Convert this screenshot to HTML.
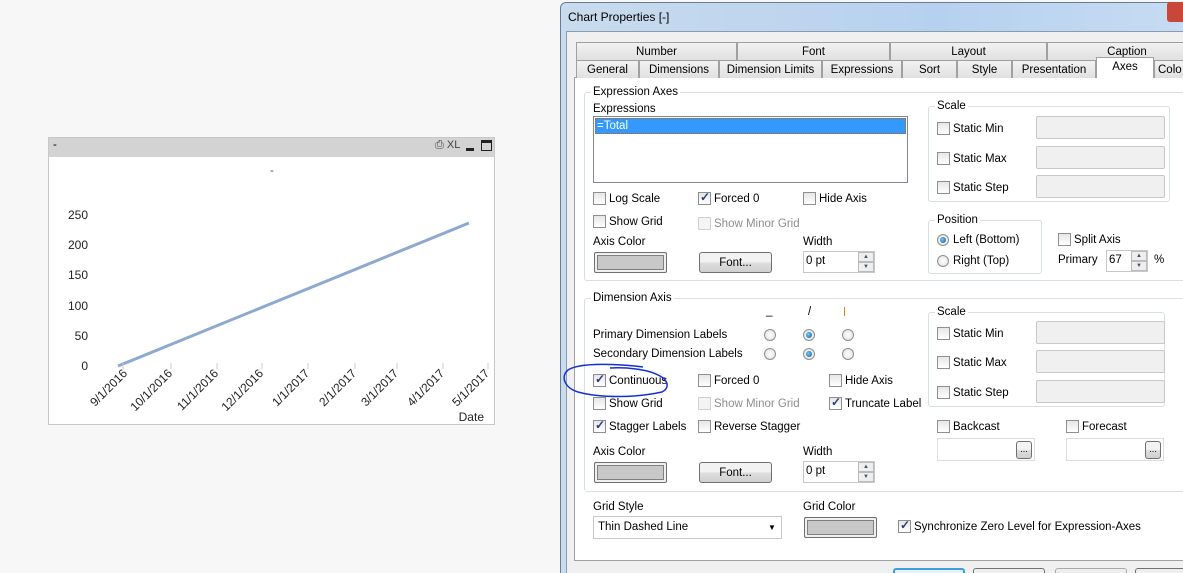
<!DOCTYPE html>
<html style="overflow:hidden;width:1183px;height:573px"><head><style>
*{margin:0;padding:0;box-sizing:border-box}
body{width:1183px;height:573px;background:#f7f7f7;position:relative;overflow:hidden;font-family:"Liberation Sans",sans-serif;font-size:11.5px;color:#000}
.a{position:absolute}
.t{position:absolute;white-space:nowrap;line-height:13px}
.cb{position:absolute;width:13px;height:13px;border:1px solid #8f8f8f;background:linear-gradient(#e6e6e6,#fff)}
.cb.k::after{content:"✓";position:absolute;left:1px;top:-3px;font-size:12px;color:#2a3d7a;font-weight:bold}
.cb.d{border-color:#cfcfcf;background:#f4f4f4}
.rb{position:absolute;width:12px;height:12px;border-radius:50%;border:1px solid #8f8f8f;background:radial-gradient(#fff,#ddd)}
.rb.on::after{content:"";position:absolute;left:2px;top:2px;width:6px;height:6px;border-radius:50%;background:radial-gradient(circle at 40% 40%,#6fd0ff,#0a4f8a)}
.gb{position:absolute;border:1px solid #d5dfe5;border-radius:3px}
.gl{position:absolute;background:#fff;padding:0 2px;line-height:13px;white-space:nowrap}
.tab{position:absolute;border:1px solid #a0a0a0;border-bottom:none;background:linear-gradient(#f2f2f2,#e0e0e0);text-align:center;line-height:18px;height:18px}
.btn{position:absolute;border:1px solid #707070;border-radius:3px;background:linear-gradient(#f2f2f2 45%,#dcdcdc 55%,#d0d0d0);text-align:center;line-height:20px}
.col{position:absolute;border:1px solid #707070;border-radius:2px;background:#c8c8c8;box-shadow:inset 0 0 0 2px #f0f0f0,inset 0 0 0 3px #808080}
.inp{position:absolute;border:1px solid #c8c8c8;background:#f0f0f0;border-radius:2px}
.gray{color:#8d8d8d}
</style></head><body>

<!-- chart object -->
<div class="a" style="left:48px;top:137px;width:447px;height:288px;border:1px solid #c8c8c8;background:#fff"></div>
<div class="a" style="left:49px;top:138px;width:445px;height:19px;background:#d3d3d3"></div>
<div class="t" style="left:53px;top:139px">-</div>
<div class="t" style="left:435px;top:139px;color:#444;font-size:11px">⎙ XL</div>
<div class="a" style="left:466px;top:148px;width:8px;height:3px;background:#222"></div>
<div class="a" style="left:481px;top:140px;width:11px;height:11px;border:1px solid #222;border-top-width:3px"></div>
<div class="t" style="left:270px;top:165px;color:#555">-</div>
<div class="t" style="left:60px;top:209px;width:28px;text-align:right;font-size:12px;color:#222">250</div>
<div class="t" style="left:60px;top:239px;width:28px;text-align:right;font-size:12px;color:#222">200</div>
<div class="t" style="left:60px;top:269px;width:28px;text-align:right;font-size:12px;color:#222">150</div>
<div class="t" style="left:60px;top:300px;width:28px;text-align:right;font-size:12px;color:#222">100</div>
<div class="t" style="left:60px;top:330px;width:28px;text-align:right;font-size:12px;color:#222">50</div>
<div class="t" style="left:60px;top:360px;width:28px;text-align:right;font-size:12px;color:#222">0</div>
<svg class="a" style="left:48px;top:137px" width="447" height="288">
<line x1="70" y1="229" x2="421" y2="86" stroke="#8ea9cf" stroke-width="3"/>
<g stroke="#ccc"><line x1="75" y1="232" x2="75" y2="226"/><line x1="123" y1="232" x2="123" y2="226"/><line x1="169" y1="232" x2="169" y2="226"/><line x1="214" y1="232" x2="214" y2="226"/><line x1="260" y1="232" x2="260" y2="226"/><line x1="307" y1="232" x2="307" y2="226"/><line x1="349" y1="232" x2="349" y2="226"/><line x1="395" y1="232" x2="395" y2="226"/><line x1="440" y1="232" x2="440" y2="226"/></g>
<g font-family="Liberation Sans" font-size="12" fill="#222" text-anchor="end">
<text transform="translate(80,237) rotate(-45)">9/1/2016</text>
<text transform="translate(125,237) rotate(-45)">10/1/2016</text>
<text transform="translate(171,237) rotate(-45)">11/1/2016</text>
<text transform="translate(216,237) rotate(-45)">12/1/2016</text>
<text transform="translate(262,237) rotate(-45)">1/1/2017</text>
<text transform="translate(309,237) rotate(-45)">2/1/2017</text>
<text transform="translate(351,237) rotate(-45)">3/1/2017</text>
<text transform="translate(397,237) rotate(-45)">4/1/2017</text>
<text transform="translate(442,237) rotate(-45)">5/1/2017</text>
</g>
<text x="436" y="284" font-family="Liberation Sans" font-size="12" fill="#222" text-anchor="end">Date</text>
</svg>

<!-- dialog -->
<div class="a" style="left:560px;top:2px;width:630px;height:571px;border:1px solid #6a7c90;border-bottom:none;border-radius:6px 0 0 0;background:linear-gradient(90deg,#c9dbee,#b6d1ef 60%,#c6dcf3)"></div>
<div class="t" style="left:568px;top:11px;font-size:12px">Chart Properties [-]</div>
<div class="a" style="left:1167px;top:2px;width:20px;height:20px;background:#c8463a;border-radius:3px"></div>
<div class="a" style="left:566px;top:31px;width:620px;height:542px;background:#f0f0f0;border:1px solid #8a9bad;border-bottom:none"></div>
<div class="a" style="left:574px;top:77px;width:612px;height:484px;background:#fff;border:1px solid #a0a0a0"></div>

<div class="tab" style="left:576px;top:42px;width:161px">Number</div>
<div class="tab" style="left:737px;top:42px;width:153px">Font</div>
<div class="tab" style="left:890px;top:42px;width:157px">Layout</div>
<div class="tab" style="left:1047px;top:42px;width:160px">Caption</div>
<div class="tab" style="left:576px;top:60px;width:63px">General</div>
<div class="tab" style="left:639px;top:60px;width:80px">Dimensions</div>
<div class="tab" style="left:719px;top:60px;width:103px">Dimension Limits</div>
<div class="tab" style="left:822px;top:60px;width:80px">Expressions</div>
<div class="tab" style="left:902px;top:60px;width:55px">Sort</div>
<div class="tab" style="left:957px;top:60px;width:55px">Style</div>
<div class="tab" style="left:1012px;top:60px;width:84px">Presentation</div>
<div class="tab" style="left:1154px;top:60px;width:40px;text-align:left;padding-left:3px">Colo</div>
<div class="tab" style="left:1096px;top:57px;width:58px;height:21px;background:#fff;line-height:19px">Axes</div>

<!-- Expression Axes -->
<div class="gb" style="left:584px;top:92px;width:610px;height:189px"></div>
<div class="gl" style="left:591px;top:86px">Expression Axes</div>
<div class="t" style="left:593px;top:103px">Expressions</div>
<div class="a" style="left:593px;top:116px;width:315px;height:67px;border:1px solid #828790;background:#fff"></div>
<div class="a" style="left:595px;top:118px;width:311px;height:16px;background:#3399ff;border:1px dotted #c06000"></div>
<div class="t" style="left:597px;top:120px;color:#fff">=Total</div>
<div class="cb" style="left:593px;top:192px"></div><div class="t" style="left:609px;top:193px">Log Scale</div>
<div class="cb k" style="left:698px;top:192px"></div><div class="t" style="left:714px;top:193px">Forced 0</div>
<div class="cb" style="left:803px;top:192px"></div><div class="t" style="left:819px;top:193px">Hide Axis</div>
<div class="cb" style="left:593px;top:215px"></div><div class="t" style="left:609px;top:216px">Show Grid</div>
<div class="cb d" style="left:698px;top:217px"></div><div class="t gray" style="left:714px;top:218px">Show Minor Grid</div>
<div class="t" style="left:593px;top:236px">Axis Color</div>
<div class="col" style="left:594px;top:252px;width:73px;height:21px"></div>
<div class="btn" style="left:699px;top:252px;width:73px;height:21px">Font...</div>
<div class="t" style="left:803px;top:236px">Width</div>
<div class="a" style="left:803px;top:251px;width:72px;height:22px;border:1px solid #c8c8c8;background:#fff"></div>
<div class="t" style="left:806px;top:255px">0 pt</div>
<div class="a" style="left:858px;top:252px;width:16px;height:10px;border:1px solid #bbb;background:#eee;font-size:6px;text-align:center;line-height:8px;color:#456">▲</div>
<div class="a" style="left:858px;top:262px;width:16px;height:10px;border:1px solid #bbb;background:#eee;font-size:6px;text-align:center;line-height:8px;color:#456">▼</div>

<div class="gb" style="left:928px;top:106px;width:242px;height:96px"></div>
<div class="gl" style="left:935px;top:100px">Scale</div>
<div class="cb" style="left:937px;top:122px"></div><div class="t" style="left:953px;top:123px">Static Min</div>
<div class="inp" style="left:1036px;top:116px;width:129px;height:23px"></div>
<div class="cb" style="left:937px;top:152px"></div><div class="t" style="left:953px;top:153px">Static Max</div>
<div class="inp" style="left:1036px;top:146px;width:129px;height:23px"></div>
<div class="cb" style="left:937px;top:181px"></div><div class="t" style="left:953px;top:182px">Static Step</div>
<div class="inp" style="left:1036px;top:175px;width:129px;height:23px"></div>

<div class="gb" style="left:928px;top:220px;width:114px;height:54px"></div>
<div class="gl" style="left:935px;top:214px">Position</div>
<div class="rb on" style="left:937px;top:234px"></div><div class="t" style="left:953px;top:234px">Left (Bottom)</div>
<div class="rb" style="left:937px;top:255px"></div><div class="t" style="left:953px;top:255px">Right (Top)</div>
<div class="cb" style="left:1058px;top:233px"></div><div class="t" style="left:1074px;top:234px">Split Axis</div>
<div class="t" style="left:1058px;top:254px">Primary</div>
<div class="a" style="left:1106px;top:250px;width:42px;height:22px;border:1px solid #c8c8c8;background:#fff"></div>
<div class="t" style="left:1109px;top:254px">67</div>
<div class="a" style="left:1131px;top:251px;width:16px;height:10px;border:1px solid #bbb;background:#eee;font-size:6px;text-align:center;line-height:8px;color:#456">▲</div>
<div class="a" style="left:1131px;top:261px;width:16px;height:10px;border:1px solid #bbb;background:#eee;font-size:6px;text-align:center;line-height:8px;color:#456">▼</div>
<div class="t" style="left:1154px;top:254px">%</div>

<!-- Dimension Axis -->
<div class="gb" style="left:584px;top:298px;width:610px;height:194px"></div>
<div class="gl" style="left:591px;top:292px">Dimension Axis</div>
<div class="t" style="left:766px;top:305px">_</div>
<div class="t" style="left:808px;top:306px">/</div>
<div class="a" style="left:844px;top:307px;width:1px;height:9px;background:#e08020"></div>
<div class="t" style="left:593px;top:329px">Primary Dimension Labels</div>
<div class="t" style="left:593px;top:348px">Secondary Dimension Labels</div>
<div class="rb" style="left:764px;top:329px"></div><div class="rb on" style="left:803px;top:329px"></div><div class="rb" style="left:842px;top:329px"></div>
<div class="rb" style="left:764px;top:348px"></div><div class="rb on" style="left:803px;top:348px"></div><div class="rb" style="left:842px;top:348px"></div>
<div class="cb k" style="left:593px;top:374px"></div><div class="t" style="left:609px;top:375px">Continuous</div>
<div class="cb" style="left:698px;top:374px"></div><div class="t" style="left:714px;top:375px">Forced 0</div>
<div class="cb" style="left:829px;top:374px"></div><div class="t" style="left:845px;top:375px">Hide Axis</div>
<div class="cb" style="left:593px;top:397px"></div><div class="t" style="left:609px;top:398px">Show Grid</div>
<div class="cb d" style="left:698px;top:397px"></div><div class="t gray" style="left:714px;top:398px">Show Minor Grid</div>
<div class="cb k" style="left:829px;top:397px"></div><div class="t" style="left:845px;top:398px">Truncate Label</div>
<div class="cb k" style="left:593px;top:420px"></div><div class="t" style="left:609px;top:421px">Stagger Labels</div>
<div class="cb" style="left:698px;top:420px"></div><div class="t" style="left:714px;top:421px">Reverse Stagger</div>
<div class="t" style="left:593px;top:446px">Axis Color</div>
<div class="col" style="left:594px;top:462px;width:73px;height:21px"></div>
<div class="btn" style="left:699px;top:462px;width:73px;height:21px">Font...</div>
<div class="t" style="left:803px;top:446px">Width</div>
<div class="a" style="left:803px;top:461px;width:72px;height:22px;border:1px solid #c8c8c8;background:#fff"></div>
<div class="t" style="left:806px;top:465px">0 pt</div>
<div class="a" style="left:858px;top:462px;width:16px;height:10px;border:1px solid #bbb;background:#eee;font-size:6px;text-align:center;line-height:8px;color:#456">▲</div>
<div class="a" style="left:858px;top:472px;width:16px;height:10px;border:1px solid #bbb;background:#eee;font-size:6px;text-align:center;line-height:8px;color:#456">▼</div>

<div class="gb" style="left:928px;top:312px;width:237px;height:95px"></div>
<div class="gl" style="left:935px;top:306px">Scale</div>
<div class="cb" style="left:937px;top:327px"></div><div class="t" style="left:953px;top:328px">Static Min</div>
<div class="inp" style="left:1036px;top:321px;width:129px;height:23px"></div>
<div class="cb" style="left:937px;top:356px"></div><div class="t" style="left:953px;top:357px">Static Max</div>
<div class="inp" style="left:1036px;top:350px;width:129px;height:23px"></div>
<div class="cb" style="left:937px;top:386px"></div><div class="t" style="left:953px;top:387px">Static Step</div>
<div class="inp" style="left:1036px;top:380px;width:129px;height:23px"></div>
<div class="cb" style="left:937px;top:420px"></div><div class="t" style="left:953px;top:421px">Backcast</div>
<div class="cb" style="left:1066px;top:420px"></div><div class="t" style="left:1082px;top:421px">Forecast</div>
<div class="a" style="left:937px;top:438px;width:98px;height:23px;border:1px solid #ddd;background:#fff"></div>
<div class="btn" style="left:1016px;top:441px;width:16px;height:18px;line-height:14px;font-size:9px">...</div>
<div class="a" style="left:1066px;top:438px;width:98px;height:23px;border:1px solid #ddd;background:#fff"></div>
<div class="btn" style="left:1145px;top:441px;width:16px;height:18px;line-height:14px;font-size:9px">...</div>

<div class="t" style="left:593px;top:501px">Grid Style</div>
<div class="a" style="left:593px;top:516px;width:189px;height:23px;border:1px solid #c8c8c8;background:#fff"></div>
<div class="t" style="left:598px;top:521px">Thin Dashed Line</div>
<div class="t" style="left:768px;top:521px;font-size:8px">▼</div>
<div class="t" style="left:803px;top:501px">Grid Color</div>
<div class="col" style="left:804px;top:517px;width:73px;height:21px"></div>
<div class="cb k" style="left:898px;top:520px"></div><div class="t" style="left:914px;top:521px">Synchronize Zero Level for Expression-Axes</div>

<div class="a" style="left:893px;top:568px;width:72px;height:10px;border:2px solid #3c9fd8;border-radius:3px;background:#e8f2fa"></div>
<div class="a" style="left:973px;top:568px;width:72px;height:10px;border:1px solid #707070;border-radius:3px;background:#eee"></div>
<div class="a" style="left:1055px;top:568px;width:72px;height:10px;border:1px solid #aaa;border-radius:3px;background:#eee"></div>
<div class="a" style="left:1135px;top:568px;width:72px;height:10px;border:1px solid #707070;border-radius:3px;background:#eee"></div>

<!-- blue annotation -->
<svg class="a" style="left:560px;top:360px" width="120" height="50"><path d="M83 7 C60 4 20 2 8 10 C0 17 5 28 18 32 C40 38 75 38 102 32 C110 28 108 20 100 16 C90 10 70 7 50 8" fill="none" stroke="#1530d0" stroke-width="1.5"/></svg>
</body></html>
